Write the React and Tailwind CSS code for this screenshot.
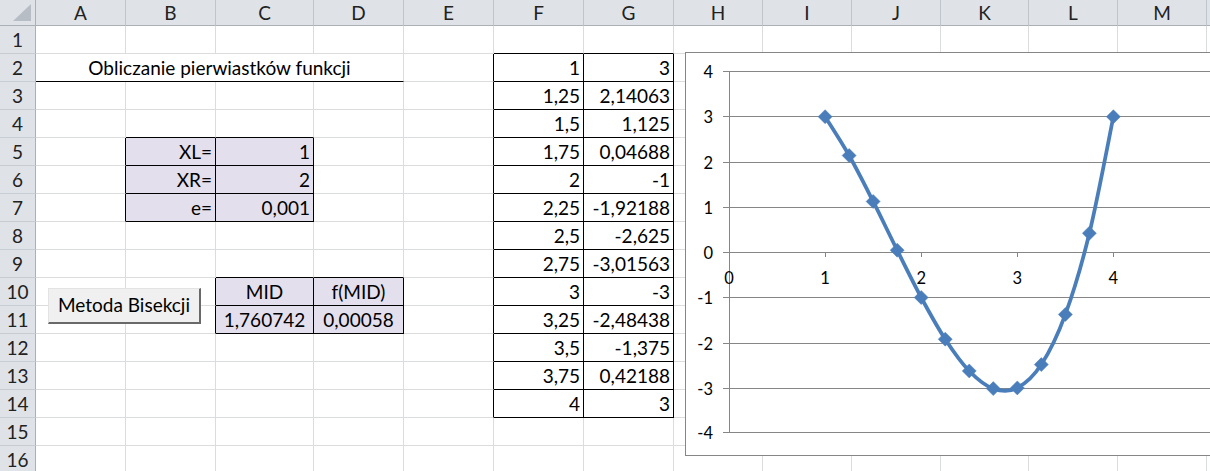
import React from "react";

const COLS = ["A", "B", "C", "D", "E", "F", "G", "H", "I", "J", "K", "L", "M", ""];
const ROWS = Array.from({ length: 16 }, (_, i) => i + 1);

const FG = [
  ["1", "3"],
  ["1,25", "2,14063"],
  ["1,5", "1,125"],
  ["1,75", "0,04688"],
  ["2", "-1"],
  ["2,25", "-1,92188"],
  ["2,5", "-2,625"],
  ["2,75", "-3,01563"],
  ["3", "-3"],
  ["3,25", "-2,48438"],
  ["3,5", "-1,375"],
  ["3,75", "0,42188"],
  ["4", "3"],
];

function inBox(r, c) {
  if (r >= 5 && r <= 7 && (c === 1 || c === 2)) return true;
  if (r >= 2 && r <= 14 && (c === 5 || c === 6)) return true;
  if (r >= 10 && r <= 11 && (c === 2 || c === 3)) return true;
  return false;
}
function filled(r, c) {
  if (r >= 5 && r <= 7 && (c === 1 || c === 2)) return true;
  if (r >= 10 && r <= 11 && (c === 2 || c === 3)) return true;
  return false;
}

function cellContent(r, c) {
  if (c === 5 && r >= 2 && r <= 14) return { t: FG[r - 2][0], a: "r" };
  if (c === 6 && r >= 2 && r <= 14) return { t: FG[r - 2][1], a: "r" };
  if (r === 5 && c === 1) return { t: "XL=", a: "r" };
  if (r === 5 && c === 2) return { t: "1", a: "r" };
  if (r === 6 && c === 1) return { t: "XR=", a: "r" };
  if (r === 6 && c === 2) return { t: "2", a: "r" };
  if (r === 7 && c === 1) return { t: "e=", a: "r" };
  if (r === 7 && c === 2) return { t: "0,001", a: "r" };
  if (r === 10 && c === 2) return { t: "MID", a: "c" };
  if (r === 10 && c === 3) return { t: "f(MID)", a: "c" };
  if (r === 11 && c === 2) return { t: "1,760742", a: "c" };
  if (r === 11 && c === 3) return { t: "0,00058", a: "c" };
  return null;
}

function Cell({ r, c }) {
  const rb = inBox(r, c) || inBox(r, c + 1);
  const bb = inBox(r, c) || inBox(r + 1, c);
  const fill = filled(r, c);
  const content = cellContent(r, c);
  return (
    <div
      className={`flex items-end overflow-visible whitespace-nowrap border-r border-b pb-[1px] ${
        rb ? "border-r-black" : "border-r-[#dadcdd]"
      } ${bb ? "border-b-black" : "border-b-[#dadcdd]"} ${fill ? "bg-[#e4dfec]" : "bg-white"} ${
        content && content.a === "c" ? "justify-center" : "justify-end pr-[3px]"
      }`}
    >
      {content ? <span className="leading-[24px]">{content.t}</span> : null}
    </div>
  );
}

const DATA = [
  [1, 3],
  [1.25, 2.14063],
  [1.5, 1.125],
  [1.75, 0.04688],
  [2, -1],
  [2.25, -1.92188],
  [2.5, -2.625],
  [2.75, -3.01563],
  [3, -3],
  [3.25, -2.48438],
  [3.5, -1.375],
  [3.75, 0.42188],
  [4, 3],
];
const X = (v) => 729 + 96.1 * v;
const Y = (v) => 252.3 - 45.2 * v;

function smoothPath(pts) {
  const t = 1 / 6;
  let d = `M${pts[0][0].toFixed(2)},${pts[0][1].toFixed(2)}`;
  for (let i = 0; i < pts.length - 1; i++) {
    const p0 = pts[i - 1] || pts[i];
    const p1 = pts[i];
    const p2 = pts[i + 1];
    const p3 = pts[i + 2] || p2;
    const c1x = p1[0] + (p2[0] - p0[0]) * t;
    const c1y = p1[1] + (p2[1] - p0[1]) * t;
    const c2x = p2[0] - (p3[0] - p1[0]) * t;
    const c2y = p2[1] - (p3[1] - p1[1]) * t;
    d += ` C${c1x.toFixed(2)},${c1y.toFixed(2)} ${c2x.toFixed(2)},${c2y.toFixed(2)} ${p2[0].toFixed(2)},${p2[1].toFixed(2)}`;
  }
  return d;
}

function Chart() {
  const pts = DATA.map(([x, y]) => [X(x), Y(y)]);
  const gridY = [
    [4, 71],
    [3, 116],
    [2, 162],
    [1, 207],
    [0, 252],
    [-1, 297],
    [-2, 343],
    [-3, 388],
    [-4, 432],
  ];
  const s = 7;
  return (
    <div className="absolute left-[685px] top-[52px] h-[404px] w-[560px] border border-[#868686] bg-white">
      <svg width="558" height="402" viewBox="686 53 558 402" className="block">
        {gridY.map(([v, y]) => (
          <line key={v} x1="723" x2="1244" y1={y + 0.5} y2={y + 0.5} stroke="#868686" strokeWidth="1" />
        ))}
        <line x1="729.5" x2="729.5" y1="71" y2="433" stroke="#868686" strokeWidth="1" />
        {[1, 2, 3, 4, 5].map((v) => (
          <line key={v} x1={Math.round(X(v)) + 0.5} x2={Math.round(X(v)) + 0.5} y1="252" y2="257" stroke="#868686" strokeWidth="1" />
        ))}
        {gridY.map(([v, y]) => (
          <text
            key={"l" + v}
            x="713"
            y={y + 1}
            textAnchor="end"
            dominantBaseline="central"
            fontFamily="Lato, 'Liberation Sans', sans-serif"
            fontSize="16.5"
            fill="#000"
          >
            {v}
          </text>
        ))}
        {[0, 1, 2, 3, 4].map((v) => (
          <text
            key={"x" + v}
            x={X(v)}
            y="278"
            textAnchor="middle"
            dominantBaseline="central"
            fontFamily="Lato, 'Liberation Sans', sans-serif"
            fontSize="16.5"
            fill="#000"
          >
            {v}
          </text>
        ))}
        <path d={smoothPath(pts)} fill="none" stroke="#4a7ebb" strokeWidth="3.75" strokeLinejoin="round" />
        {pts.map(([cx, cy], i) => (
          <polygon
            key={i}
            points={`${cx},${cy - s} ${cx + s},${cy} ${cx},${cy + s} ${cx - s},${cy}`}
            fill="#4a7ebb"
            stroke="#4a7ebb"
            strokeWidth="0.5"
          />
        ))}
      </svg>
    </div>
  );
}

export default function App() {
  return (
    <div className="relative h-[471px] w-[1210px] overflow-hidden bg-white font-['Lato','Liberation_Sans',sans-serif] text-[19px] text-black">
      <div className="grid grid-cols-[36px_90px_90px_98px_90px_90px_90px_90px_89px_89px_89px_88px_89px_89px_20px] grid-rows-[26px_repeat(16,28px)]">
        <div className="relative border-r border-b border-[#abb0b7] bg-[#dfe3e8]">
          <svg className="absolute left-0 top-0" width="35" height="25" viewBox="0 0 35 25">
            <polygon points="13,21 31,21 31,4" fill="#b7bdc5" />
          </svg>
        </div>
        {COLS.map((c, i) => (
          <div
            key={"h" + i}
            className="flex items-center justify-center border-r border-b border-r-[#c0c5cc] border-b-[#abb0b7] bg-[#dfe3e8] text-[#222] leading-[24px]"
          >
            {c}
          </div>
        ))}
        {ROWS.map((r) => (
          <React.Fragment key={r}>
            <div className="flex items-end justify-center border-r border-b border-r-[#abb0b7] border-b-[#c8cdd3] bg-[#dfe3e8] pb-[1px] text-[#222]">
              <span className="leading-[24px]">{r}</span>
            </div>
            {r === 2 ? (
              <>
                <div className="col-span-4 flex items-end justify-center border-r border-b border-r-[#dadcdd] border-b-black bg-white pb-[1px]">
                  <span className="leading-[24px]">Obliczanie pierwiastków funkcji</span>
                </div>
                {COLS.slice(4).map((_, j) => (
                  <Cell key={j} r={r} c={j + 4} />
                ))}
              </>
            ) : (
              COLS.map((_, j) => <Cell key={j} r={r} c={j} />)
            )}
          </React.Fragment>
        ))}
      </div>

      <button className="absolute left-[48px] top-[288px] flex h-[36px] w-[153px] items-center justify-center border-t border-l border-r-2 border-b-2 border-t-[#e3e3e3] border-l-[#e3e3e3] border-r-[#696969] border-b-[#696969] bg-[#f0f0f0] pb-[1px] text-[19px] leading-[24px] text-black">
        Metoda Bisekcji
      </button>

      <Chart />
    </div>
  );
}
